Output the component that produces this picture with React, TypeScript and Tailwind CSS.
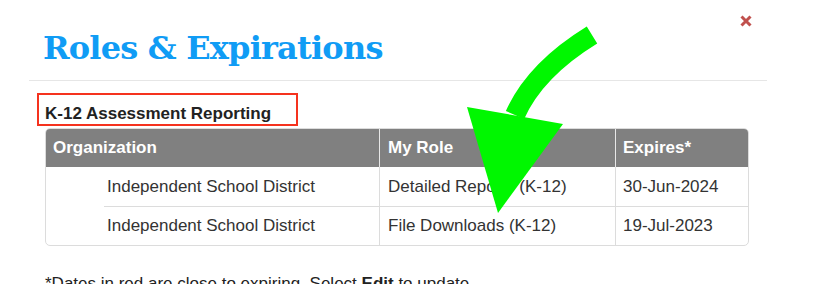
import React from "react";

const rows = [
  { org: "Independent School District", role: "Detailed Reports (K-12)", exp: "30-Jun-2024" },
  { org: "Independent School District", role: "File Downloads (K-12)", exp: "19-Jul-2023" },
];

export default function App() {
  return (
    <div className="relative w-[824px] h-[284px] overflow-hidden bg-white" style={{ fontFamily: '"Liberation Sans", Arial, sans-serif' }}>
      <div className="ml-[29px] w-[738px] h-[81px] border-b border-[#e6e6e6] flex items-start justify-between">
        <h1
          className="mt-[28px] ml-[14px] text-[32px] leading-[40px] font-bold text-[#109cf5] tracking-[-0.8px]"
          style={{ fontFamily: '"DejaVu Serif", serif' }}
        >
          Roles &amp; Expirations
        </h1>
        <svg className="mt-[15px] mr-[15px]" width="12" height="12" viewBox="0 0 12 12">
          <path d="M1.5 1.5 L10.5 10.5 M10.5 1.5 L1.5 10.5" stroke="#c0504d" strokeWidth="3" strokeLinecap="butt" />
        </svg>
      </div>

      <div className="ml-[37px] mt-[12px] w-[261px] h-[33px] border-2 border-[#f5321e] pl-[6px] pt-[10px]">
        <div className="text-[17px] leading-[18px] font-bold text-[#222] whitespace-nowrap">K-12 Assessment Reporting</div>
      </div>

      <div className="ml-[45px] mt-[2px] w-[704px] rounded-[5px] border border-[#dcdcdc] overflow-hidden text-[17px]">
        <div className="grid grid-cols-[334px_236px_1fr] bg-[#808080] text-white font-bold h-[38px]">
          <div className="px-[7px] flex items-center border-r border-[#e8e8e8]">Organization</div>
          <div className="px-[8px] flex items-center border-r border-[#e8e8e8]">My Role</div>
          <div className="px-[7px] flex items-center">Expires*</div>
        </div>
        {rows.map((r, i) => (
          <div key={i} className="grid grid-cols-[334px_236px_1fr] h-[39px] text-[#333]">
            <div className="border-r border-[#dcdcdc] pl-[58px]">
              <div className={"h-full flex items-center pl-[3px] " + (i > 0 ? "border-t border-[#dcdcdc]" : "")}>{r.org}</div>
            </div>
            <div className={"border-r border-[#dcdcdc] px-[8px] flex items-center " + (i > 0 ? "border-t border-[#dcdcdc]" : "")}>{r.role}</div>
            <div className={"px-[7px] flex items-center " + (i > 0 ? "border-t border-[#dcdcdc]" : "")}>{r.exp}</div>
          </div>
        ))}
      </div>

      <p className="ml-[45px] mt-[28px] text-[17px] leading-[20px] text-[#222]">
        *Dates in red are close to expiring. Select <b>Edit</b> to update.
      </p>

      <svg className="absolute left-0 top-0 pointer-events-none" width="824" height="284" viewBox="0 0 824 284">
        <path d="M592 35 Q 535 70 515 115" stroke="#00f700" strokeWidth="20" fill="none" strokeLinecap="butt" />
        <polygon points="467,107 563,124 498,213" fill="#00f700" />
      </svg>
    </div>
  );
}
